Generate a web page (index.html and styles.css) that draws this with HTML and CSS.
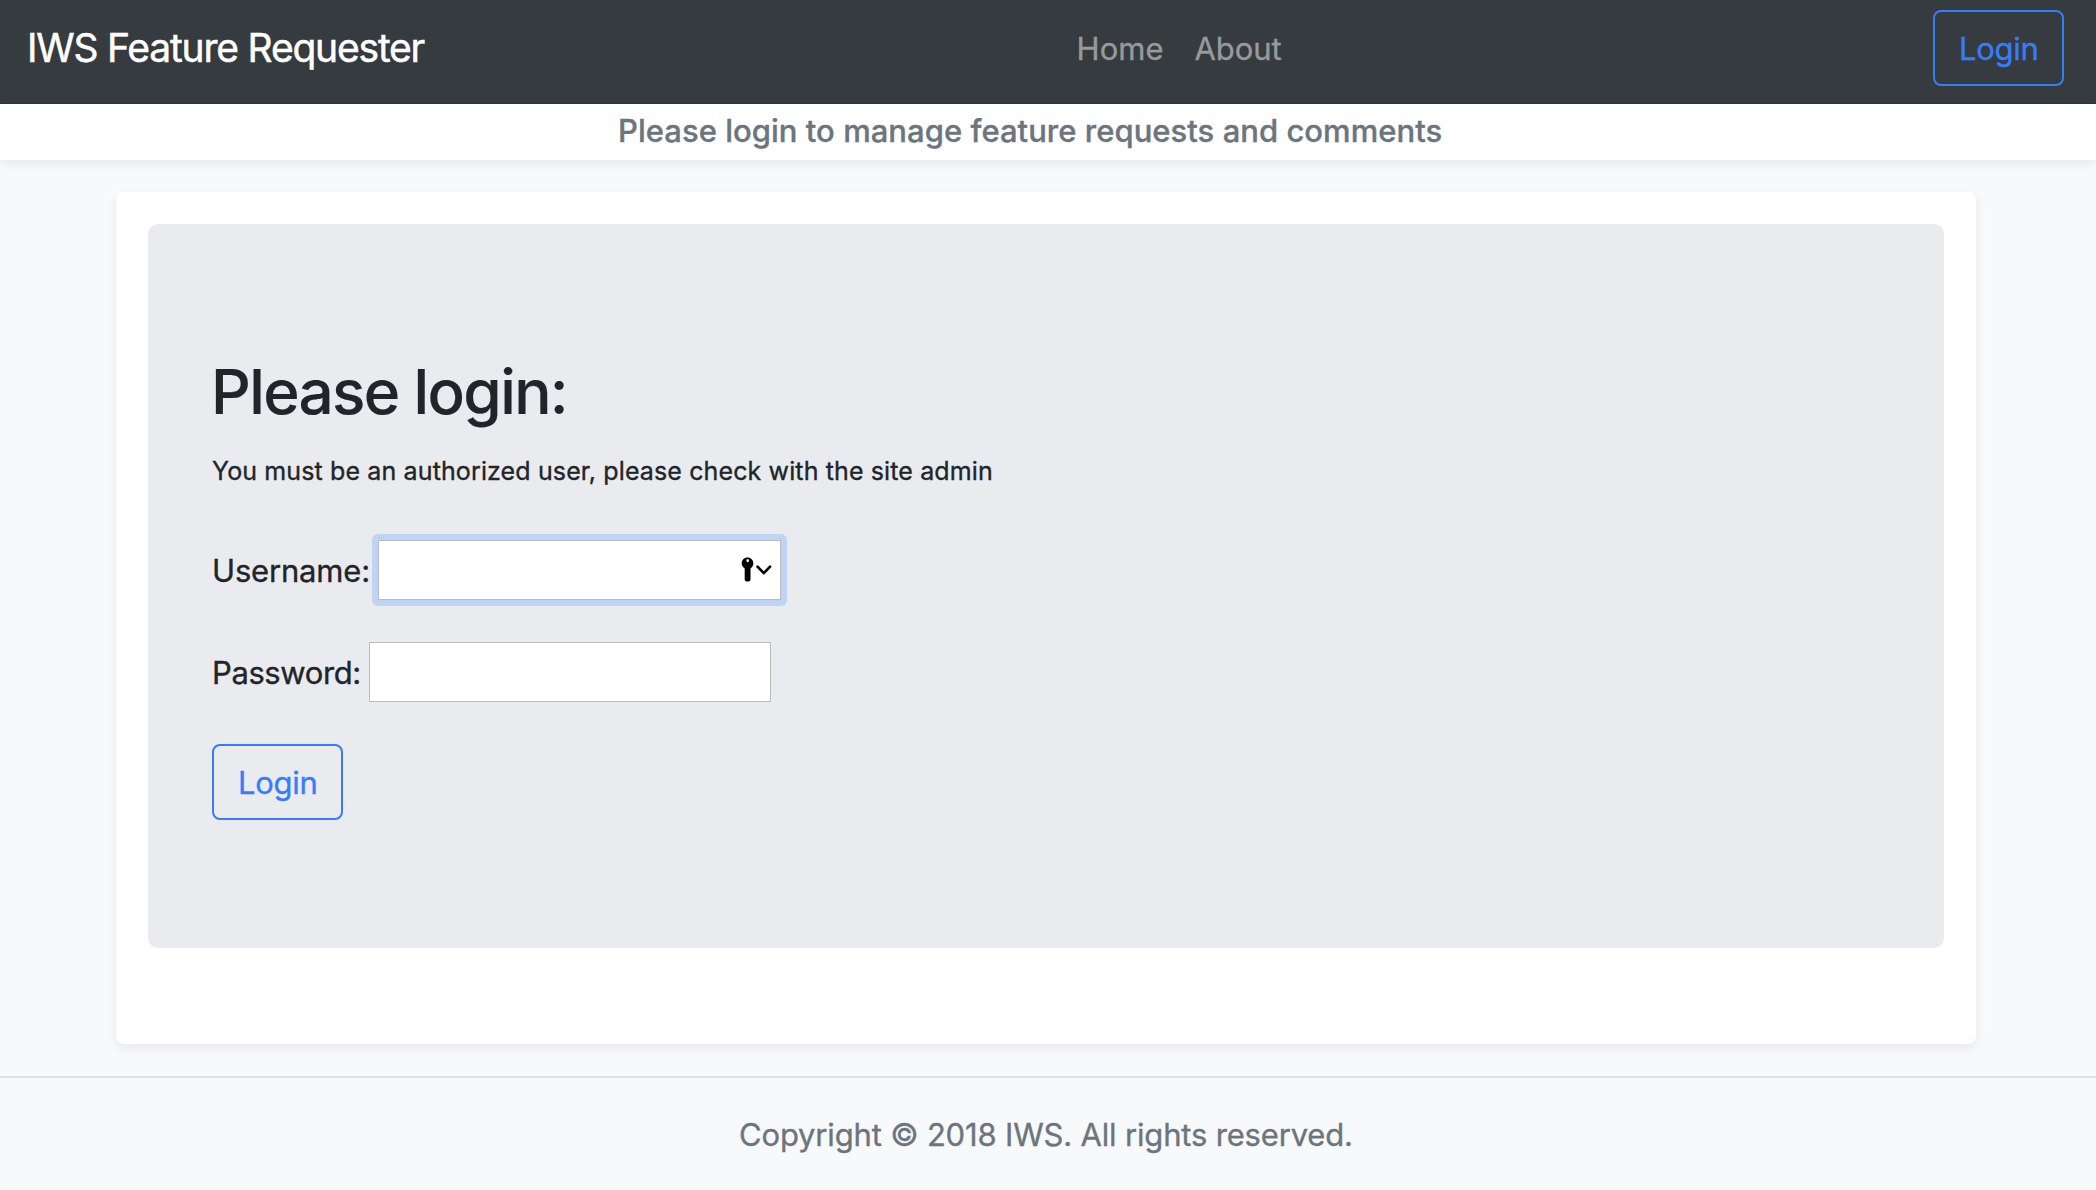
FILE: index.html
```
<!DOCTYPE html>
<html lang="en">
<head>
<meta charset="utf-8">
<title>IWS Feature Requester</title>
<link rel="stylesheet" href="styles.css">
</head>
<body>
<header class="navbar">
  <a class="brand" href="#">IWS Feature Requester</a>
  <nav class="nav">
    <a class="nav-home" href="#">Home</a>
    <a class="nav-about" href="#">About</a>
  </nav>
  <a class="btn" href="#">Login</a>
</header>
<div class="notice">Please login to manage feature requests and comments</div>
<main class="card">
  <section class="panel">
    <h1 class="title">Please login:</h1>
    <p class="hint">You must be an authorized user, please check with the site admin</p>
    <form class="form">
      <div class="field">
        <label class="label-user" for="username">Username:</label>
        <div class="input-wrap">
          <input class="input" id="username" type="text">
          <svg class="key" width="32" height="26" viewBox="0 0 32 26">
            <path fill-rule="evenodd" d="M6.500.5C10 .5 12.300 3 12.300 6.200c0 2.300-1.100 4.100-2.800 5.200v10.800c0 1.500-1 2.300-2.900 2.300s-2.900-.8-2.900-2.300V11.400C2 10.300.7 8.500.7 6.200.7 3 3 .5 6.500.5zM6.700 2a1.300 1.600 0 1 0 0 3.200 1.300 1.600 0 0 0 0-3.200z"/>
            <path d="M16.500 9.600l6.300 6.600 6.300-6.600" fill="none" stroke="#000" stroke-width="2.600" stroke-linecap="round" stroke-linejoin="round"/>
          </svg>
        </div>
      </div>
      <div class="field">
        <label class="label-pass" for="password">Password:</label>
        <input class="input" id="password" type="password">
      </div>
      <button class="btn" type="button">Login</button>
    </form>
  </section>
</main>
<footer class="footer">Copyright © 2018 IWS. All rights reserved.</footer>
</body>
</html>
```
FILE: styles.css
```
* { box-sizing: border-box; }

body {
  margin: 0;
  background: #f8f9fb;
  color: #212529;
  font: 400 31px/48px Inter, "Liberation Sans", sans-serif;
  -webkit-text-stroke: 0.35px currentColor;
}

a { text-decoration: none; color: inherit; }

.navbar {
  display: flex;
  align-items: flex-start;
  height: 104px;
  padding: 10px 32px 0 27px;
  background: #363b3f;
  border-bottom: 1px solid #35303a;
}

.brand {
  width: 1049.5px;
  color: #fff;
  font-size: 39px;
  line-height: 76px;
  letter-spacing: -1.2px;
  -webkit-text-stroke-width: 0.5px;
}

.nav {
  display: flex;
  color: #98999c;
  line-height: 77px;
}

.nav-home { width: 118px; letter-spacing: 0.1px; }
.nav-about { letter-spacing: -0.1px; }

.btn {
  display: block;
  width: 131px;
  height: 76px;
  padding: 0 0 0 24px;
  border: 2px solid #377df7;
  border-radius: 8px;
  background: transparent;
  color: #377df7;
  font: inherit;
  line-height: 73px;
  letter-spacing: -0.3px;
  text-align: left;
}

.navbar .btn { margin-left: auto; }

.notice {
  height: 56px;
  padding-left: 618px;
  background: #fff;
  box-shadow: 0 4px 12px rgba(0, 0, 0, 0.07);
  color: #6c757d;
  font-weight: 500;
  line-height: 54px;
  letter-spacing: 0.03px;
}

.card {
  height: 852px;
  margin: 32px 120px 32px 116px;
  padding: 32px;
  border-radius: 8px;
  background: #fff;
  box-shadow: 0 4px 12px rgba(0, 0, 0, 0.07);
}

.panel {
  height: 724px;
  padding: 130px 64px 0;
  border-radius: 10px;
  background: #eaebef;
}

.title {
  margin: 0 0 17px -1px;
  font-size: 62px;
  font-weight: 500;
  line-height: 76px;
  letter-spacing: -1.63px;
  -webkit-text-stroke-width: 0.2px;
}

.hint {
  margin: 0 0 45px;
  font-size: 25px;
  line-height: 48px;
  letter-spacing: 0.124px;
}

.field {
  display: flex;
  height: 60px;
  margin-bottom: 42px;
  line-height: 61px;
}

.label-user { width: 166px; letter-spacing: -0.18px; }
.label-pass { width: 157px; letter-spacing: -0.4px; }

.input {
  display: block;
  width: 402px;
  height: 60px;
  padding: 0 12px;
  border: 1px solid #bbbcbf;
  border-radius: 0;
  background: #fff;
  font: inherit;
}

/* Focus ring with soft corners around a square-cornered input */
.input-wrap {
  position: relative;
  padding: 6px;
  margin: -6px;
  height: 72px;
  border-radius: 6px;
  background: #bfd4f5;
}

.input-wrap .input { width: 403px; outline: none; }

.key {
  position: absolute;
  right: 14px;
  top: 23px;
}

.footer {
  height: 114px;
  padding: 33px 0 0 739px;
  border-top: 2px solid #dfe1e4;
  color: #6c757d;
  letter-spacing: -0.172px;
}
```
